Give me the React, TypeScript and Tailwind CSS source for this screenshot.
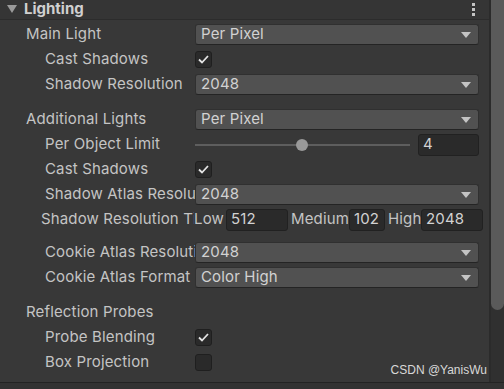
import React from "react";

const font = { fontFamily: "Inter, 'Noto Sans', sans-serif" };

function Arrow() {
  return (
    <svg width="10" height="6" viewBox="0 0 10 6" className="shrink-0">
      <path d="M0 0 L10 0 L5 6 Z" fill="#c4c4c4" />
    </svg>
  );
}

function Dropdown({ value }: { value: string }) {
  return (
    <div className="flex h-[21px] flex-1 items-center justify-between rounded-[3px] border border-[#303030] border-b-[#242424] bg-[#515151] pl-[5px] pr-[7px]">
      <span className="text-[#d2d2d2]">{value}</span>
      <Arrow />
    </div>
  );
}

function Check({ on }: { on: boolean }) {
  return (
    <div className="flex h-[17px] w-[17px] items-center justify-center rounded-[3px] border border-[#1f1f1f] bg-[#2a2a2a]">
      {on && (
        <svg width="11" height="9" viewBox="0 0 11 9">
          <path d="M1 4.5 L4 7.5 L10 1" fill="none" stroke="#e4e4e4" strokeWidth="1.8" />
        </svg>
      )}
    </div>
  );
}

function Field({ value, className, clip }: { value: string; className: string; clip?: string }) {
  return (
    <div className={`flex h-[22px] shrink-0 items-center overflow-hidden whitespace-nowrap rounded-[3px] border border-[#212121] bg-[#2a2a2a] pl-[4px] text-[#d2d2d2] ${className}`}>
      <span className={`shrink-0 overflow-hidden ${clip ?? ""}`}>{value}</span>
    </div>
  );
}

function Row({ label, sub, children }: { label: string; sub?: boolean; children?: React.ReactNode }) {
  return (
    <div className="flex h-[25px] items-center pr-[10px]">
      <div className={`w-[195px] shrink-0 overflow-hidden whitespace-nowrap ${sub ? "pl-[45px]" : "pl-[26px]"}`}>
        <span className="pr-[2px]">{label}</span>
      </div>
      <div className="flex flex-1 items-center">{children}</div>
    </div>
  );
}

export default function App() {
  return (
    <div className="relative h-[389px] w-[504px] overflow-hidden bg-[#383838] text-[15px] tracking-[0.15px] text-[#c4c4c4]" style={font}>
      <div className="flex h-[382px]">
        <div className="flex flex-1 flex-col">
          {/* header */}
          <div className="flex h-[20px] items-center border-b border-[#2c2c2c] bg-[#353535] pl-[7px] pr-[14px]">
            <svg width="10" height="8" viewBox="0 0 10 8" className="mt-[-1px]">
              <path d="M0 0 L10 0 L5 8 Z" fill="#9a9a9a" />
            </svg>
            <span className="ml-[7px] flex-1 font-bold tracking-normal text-[#d0d0d0]">Lighting</span>
            <div className="flex flex-col gap-[2px]">
              <div className="h-[3px] w-[3px] bg-[#c4c4c4]" />
              <div className="h-[3px] w-[3px] bg-[#c4c4c4]" />
              <div className="h-[3px] w-[3px] bg-[#c4c4c4]" />
            </div>
          </div>

          <div className="pt-[2px]">
            <Row label="Main Light">
              <Dropdown value="Per Pixel" />
            </Row>
            <Row label="Cast Shadows" sub>
              <Check on />
            </Row>
            <Row label="Shadow Resolution" sub>
              <Dropdown value="2048" />
            </Row>
          </div>

          <div className="pt-[10px]">
            <Row label="Additional Lights">
              <Dropdown value="Per Pixel" />
            </Row>
            <Row label="Per Object Limit" sub>
              <div className="relative flex h-[22px] w-[215px] shrink-0 items-center">
                <div className="h-[2px] w-full bg-[#5e5e5e]" />
                <div className="absolute left-[101px] top-[5px] h-[12px] w-[12px] rounded-full bg-[#999999]" />
              </div>
              <Field value="4" className="ml-[8px] w-[61px]" />
            </Row>
            <Row label="Cast Shadows" sub>
              <Check on />
            </Row>
            <Row label="Shadow Atlas Resolution" sub>
              <Dropdown value="2048" />
            </Row>
            <div className="flex h-[25px] items-center">
              <div className="w-[194px] shrink-0 overflow-hidden whitespace-nowrap pl-[41px]">Shadow Resolution Tiers</div>
              <span className="w-[32px] shrink-0">Low</span>
              <Field value="512" className="w-[62px]" />
              <span className="ml-[3px] w-[58px] shrink-0">Medium</span>
              <Field value="1024" className="w-[36px]" clip="w-[25px]" />
              <span className="ml-[3px] w-[33px] shrink-0">High</span>
              <Field value="2048" className="w-[62px]" />
            </div>
          </div>

          <div className="pt-[8px]">
            <Row label="Cookie Atlas Resolution" sub>
              <Dropdown value="2048" />
            </Row>
            <Row label="Cookie Atlas Format" sub>
              <Dropdown value="Color High" />
            </Row>
          </div>

          <div className="pt-[10px]">
            <Row label="Reflection Probes" />
            <Row label="Probe Blending" sub>
              <Check on />
            </Row>
            <Row label="Box Projection" sub>
              <Check on={false} />
            </Row>
          </div>
        </div>

        {/* scrollbar */}
        <div className="w-[16px] shrink-0 border-l-2 border-[#2b2b2b] bg-[#303030]">
          <div className="h-[310px] w-[13px] rounded-b-[7px] bg-[#5a5a5a]" />
        </div>
      </div>
      <div className="h-[7px] border-t border-[#232323] bg-[#323232]" />

      <div className="absolute bottom-[10px] right-[17px] text-[12px] tracking-normal text-[#d8d8d8]" style={{ fontFamily: "'Liberation Sans', Arial, sans-serif" }}>
        CSDN @YanisWu
      </div>
    </div>
  );
}
